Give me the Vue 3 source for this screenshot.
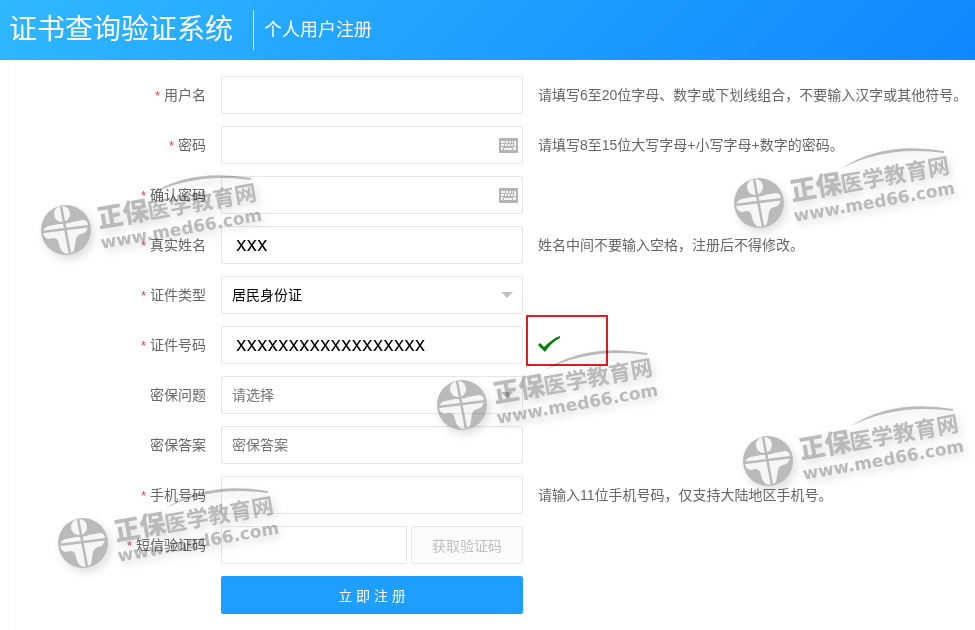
<template>
    <div class="register-page">
        <header class="page-header">
            <h1 class="system-name">证书查询验证系统</h1>
            <span class="page-name">个人用户注册</span>
        </header>

        <form class="register-form" @submit.prevent>
            <div v-for="field in fields" :key="field.id" class="form-row">
                <label class="form-label" :for="field.id">
                    <span v-if="field.required" class="required">*</span>
                    {{ field.label }}
                </label>

                <div class="form-control">
                    <select v-if="field.type === 'select'" :id="field.id" v-model="field.value" class="control"
                        :class="{ muted: field.muted }">
                        <option v-for="option in field.options" :key="option">{{ option }}</option>
                    </select>
                    <input v-else :id="field.id" v-model="field.value" :type="field.type || 'text'" class="control"
                        :class="{ filled: field.filled }" :placeholder="field.placeholder">

                    <!-- Soft keyboard button for the password fields -->
                    <button v-if="field.type === 'password'" type="button" class="keyboard" aria-label="软键盘">
                        <svg width="19" height="15" viewBox="0 0 19 15">
                            <rect width="19" height="15" fill="#b4b4b4" />
                            <path d="M2 3h4v2h-4zM7 3h2v2h-2zM10 3h2v2h-2zM13 3h1v2h-1zM15 3h2v5h-2zM2 6h3v2h-3zM6 6h2v2h-2zM9 6h2v2h-2zM12 6h2v2h-2zM2 9h2v3h-2zM5 10h8v2h-8zM14 9h3v3h-3z"
                                fill="#f4f4f4" />
                        </svg>
                    </button>
                    <svg v-if="field.type === 'select'" class="arrow" width="12" height="6" viewBox="0 0 12 6">
                        <path d="M0 0h12L6 6z" fill="#c2c2c2" />
                    </svg>
                    <button v-if="field.code" type="button" class="code-button" disabled>获取验证码</button>
                </div>

                <p v-if="field.hint" class="hint">{{ field.hint }}</p>
                <div v-if="field.valid" class="hint">
                    <svg class="tick" width="24" height="18" viewBox="0 0 24 18">
                        <path d="M0 9l2-2 4 4C11 6 16 2 22 0v2C16 5 12 9 7 16z" fill="#0a800a" />
                    </svg>
                    <span class="highlight"></span>
                </div>
            </div>

            <div class="form-row">
                <button type="submit" class="submit-button">立 即 注 册</button>
            </div>
        </form>

        <svg v-for="(mark, index) in watermarks" :key="index" class="watermark" :style="mark" width="236" height="100"
            viewBox="0 0 236 100" aria-hidden="true">
            <circle cx="26" cy="55" r="25" fill="#bababa" />
            <g fill="#f6f6f6">
                <ellipse cx="22" cy="39" rx="8" ry="8" />
                <path d="M3 57Q4 52 9 51L19 49Q28 49 32 47L43 45Q48 45 48 51Q47 58 41 59Q37 60 36 64L34 76Q30 80 24 78Q20 75 19 69Q18 63 14 63L8 64Q3 62 3 57z" />
            </g>
            <path d="M21 31L30 79M2 57L50 51" fill="none" stroke="#bababa" stroke-width="2.500" />
            <path d="M109 20Q150-7 211 3V5Q155-3 109 20z" fill="#bababa" />
            <g transform="translate(59 53) rotate(-10)" class="watermark-text">
                <text class="watermark-lead">正保</text>
                <text x="51" class="watermark-name">医学教育网</text>
                <text x="-1" y="21" class="watermark-url">www.med66.com</text>
            </g>
        </svg>
    </div>
</template>

<script setup>
import { ref } from 'vue';

const fields = ref([
    { id: 'username', label: '用户名', required: true, value: '', hint: '请填写6至20位字母、数字或下划线组合，不要输入汉字或其他符号。' },
    { id: 'password', label: '密码', required: true, type: 'password', value: '', hint: '请填写8至15位大写字母+小写字母+数字的密码。' },
    { id: 'confirm', label: '确认密码', required: true, type: 'password', value: '' },
    { id: 'realname', label: '真实姓名', required: true, value: 'XXX', filled: true, hint: '姓名中间不要输入空格，注册后不得修改。' },
    { id: 'cardtype', label: '证件类型', required: true, type: 'select', value: '居民身份证', options: ['居民身份证'] },
    { id: 'cardno', label: '证件号码', required: true, value: 'XXXXXXXXXXXXXXXXXX', filled: true, valid: true },
    { id: 'question', label: '密保问题', type: 'select', value: '请选择', options: ['请选择'], muted: true },
    { id: 'answer', label: '密保答案', value: '', placeholder: '密保答案' },
    { id: 'mobile', label: '手机号码', required: true, value: '', hint: '请输入11位手机号码，仅支持大陆地区手机号。' },
    { id: 'smscode', label: '短信验证码', required: true, value: '', code: true },
]);

const watermarks = [
    { left: '40px', top: '175px' },
    { left: '733px', top: '148px' },
    { left: '436px', top: '350px' },
    { left: '742px', top: '406px' },
    { left: '57px', top: '488px' },
];
</script>

<style>
body {
    margin: 0;
    background: #fff;
}
</style>

<style scoped>
.register-page {
    position: relative;
    overflow: hidden;
    font-family: "Liberation Sans", "Noto Sans CJK SC", sans-serif;
    font-size: 14px;
    color: #666;
}

.page-header {
    display: flex;
    align-items: center;
    height: 60px;
    padding: 0 9px;
    color: #fff;
    background: linear-gradient(135deg, #2fb8ff 0%, #1e9fff 50%, #0f88ff 100%);
}

.system-name {
    margin: 0;
    font-size: 28px;
    font-weight: 400;
    line-height: 40px;
}

.page-name {
    margin-left: 20px;
    padding-left: 10px;
    border-left: 1px solid #fff;
    font-size: 18px;
    line-height: 40px;
}

.register-form {
    display: flex;
    flex-direction: column;
    gap: 12px;
    margin-left: 8px;
    padding: 16px 0;
    border-left: 1px solid #fafafa;
}

.form-row {
    display: grid;
    grid-template-columns: 197px 302px 1fr;
    column-gap: 15px;
    align-items: center;
    height: 38px;
}

.form-label {
    text-align: right;
    line-height: 20px;
}

.required {
    color: #d9484f;
    font-size: 13px;
}

.form-control {
    position: relative;
    display: flex;
    gap: 4px;
}

.control {
    flex: 1;
    min-width: 0;
    height: 38px;
    box-sizing: border-box;
    padding: 0 10px;
    border: 1px solid #e6e6e6;
    border-radius: 2px;
    background: #fff;
    color: #000;
    font-family: inherit;
    font-size: 14px;
    appearance: none;
    outline: none;
}

.control.muted,
.control::placeholder {
    color: #757575;
}

.control.filled {
    padding-left: 14px;
    font-family: Inter, sans-serif;
    font-size: 15px;
    font-weight: 500;
}

.keyboard {
    position: absolute;
    right: 5px;
    top: 12px;
    display: flex;
    padding: 0;
    border: 0;
    background: none;
}

.arrow {
    position: absolute;
    right: 10px;
    top: 16px;
    pointer-events: none;
}

.code-button {
    width: 112px;
    padding: 0;
    border: 1px solid #e6e6e6;
    border-radius: 2px;
    background: #fbfbfb;
    color: #c0c0c0;
    font-family: inherit;
    font-size: 14px;
}

.hint {
    position: relative;
    margin: 0;
    line-height: 20px;
    white-space: nowrap;
}

.tick {
    display: block;
}

.highlight {
    position: absolute;
    left: -12px;
    top: -21px;
    width: 78px;
    height: 47px;
    border: 2px solid #e01b22;
}

.submit-button {
    grid-column: 2;
    height: 38px;
    padding: 0;
    border: 0;
    border-radius: 2px;
    background: #1e9fff;
    color: #fff;
    font-family: inherit;
    font-size: 14px;
}

.watermark {
    position: absolute;
    pointer-events: none;
    mix-blend-mode: multiply;
    filter: drop-shadow(3px 4px 4px rgba(0, 0, 0, 0.13));
}

.watermark-text {
    fill: #bababa;
    font-weight: 700;
}

.watermark-lead {
    font-size: 26px;
    font-weight: 900;
}

.watermark-name {
    font-size: 22px;
}

.watermark-url {
    font-family: "DejaVu Sans", sans-serif;
    font-size: 17px;
}
</style>
